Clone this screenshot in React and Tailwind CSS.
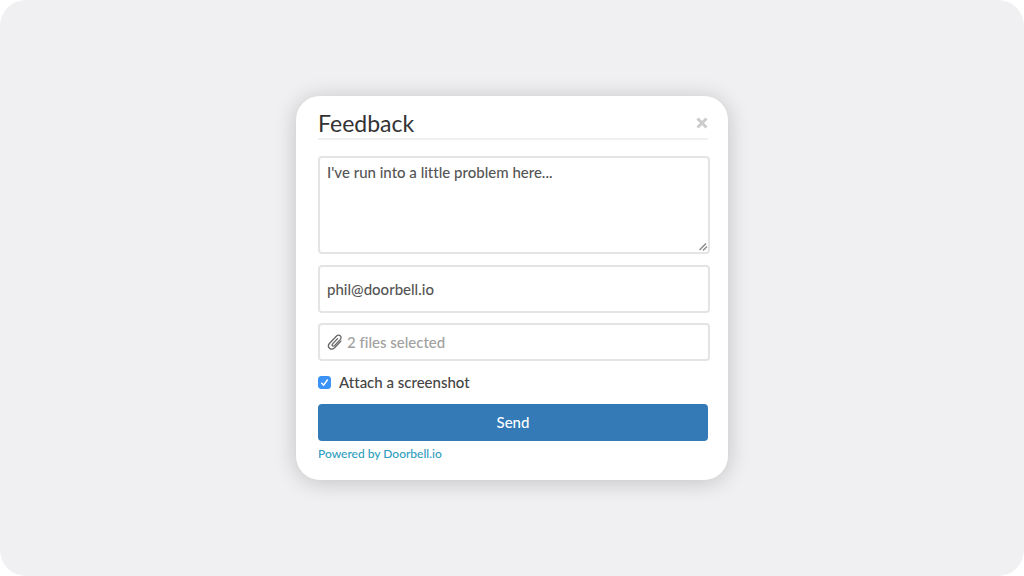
import React, { useState } from 'react';

const fieldClass =
  'block w-full rounded border-2 border-[#e4e4e4] bg-white px-[7px] text-[15px] font-medium text-[#555] outline-none focus:border-sky-400';

function PaperclipIcon() {
  return (
    <svg
      viewBox="0 0 16 18"
      className="h-[18px] w-4 shrink-0"
      fill="none"
      stroke="#666"
      strokeWidth="1.3"
      strokeLinecap="round"
      strokeLinejoin="round"
      aria-hidden="true"
    >
      <path d="M10.600 5.600 5.600 10.900c-1.300 1.500.5 3.100 1.900 1.700l5.700-6c2.600-2.900-1.200-6.100-3.900-3.400L2.600 10.200c-3.300 3.700 1.400 8 5 4.500l6.300-6.600" />
    </svg>
  );
}

function ResizeGrip() {
  return (
    <svg
      viewBox="0 0 9 9"
      className="pointer-events-none absolute right-[2px] bottom-[2px] h-[9px] w-[9px]"
      stroke="#8c8c8c"
      strokeWidth="1.5"
      aria-hidden="true"
    >
      <path d="M0.500 7 7 0.500M4 7.500 8 3.500" />
    </svg>
  );
}

function FeedbackForm() {
  const [message, setMessage] = useState("I've run into a little problem here...");
  const [email, setEmail] = useState('phil@doorbell.io');
  const [fileCount, setFileCount] = useState(2);
  const [attach, setAttach] = useState(true);
  const [open, setOpen] = useState(true);

  if (!open) return null;

  return (
    <form
      onSubmit={(e) => e.preventDefault()}
      className="w-full max-w-[432px] rounded-3xl bg-white pt-3 pr-[18px] pb-[18px] pl-[22px] shadow-[0_2px_22px_rgba(0,0,0,0.2)]"
    >
      <div className="mr-[2px] flex items-center justify-between border-b-2 border-[#f0f0f0]">
        <h1 className="text-[23px] leading-[30px] text-[#333]">Feedback</h1>
        <button
          type="button"
          aria-label="Close"
          onClick={() => setOpen(false)}
          className="flex h-5 w-3 items-center justify-center"
        >
          <svg viewBox="0 0 12 12" className="h-3 w-3" stroke="#ccc" strokeWidth="3" aria-hidden="true">
            <path d="M1.500 1.500 10.500 10.500M10.500 1.500 1.500 10.500" />
          </svg>
        </button>
      </div>

      <div className="relative mt-4">
        <textarea
          aria-label="Message"
          value={message}
          onChange={(e) => setMessage(e.target.value)}
          className={`${fieldClass} h-[98px] resize-none py-1 leading-5`}
        />
        <ResizeGrip />
      </div>

      <input
        type="email"
        aria-label="Your email address"
        value={email}
        onChange={(e) => setEmail(e.target.value)}
        className={`${fieldClass} mt-[11px] h-12`}
      />

      <label
        className="mt-[10px] flex h-[38px] w-full cursor-pointer items-center gap-1 rounded border-2 border-[#e4e4e4] px-[7px] text-[15px] font-medium text-[#a0a0a0]"
      >
        <PaperclipIcon />
        <span>{fileCount} files selected</span>
        <input
          type="file"
          multiple
          className="sr-only"
          onChange={(e) => setFileCount(e.target.files.length)}
        />
      </label>

      <label className="mt-[11px] flex items-center gap-2 text-[15px] leading-5 font-medium text-[#444]">
        <span className="relative flex h-[13px] w-[13px]">
          <input
            type="checkbox"
            checked={attach}
            onChange={(e) => setAttach(e.target.checked)}
            className="peer h-[13px] w-[13px] appearance-none rounded-[3px] border border-gray-400 bg-white checked:border-[#3b93f8] checked:bg-[#3b93f8]"
          />
          <svg
            viewBox="0 0 13 13"
            className="pointer-events-none absolute inset-0 hidden h-[13px] w-[13px] peer-checked:block"
            fill="none"
            stroke="white"
            strokeWidth="1.500"
            aria-hidden="true"
          >
            <path d="M3.300 6.800 5.600 9.200 9.700 3.500" />
          </svg>
        </span>
        Attach a screenshot
      </label>

      <div className="mr-[2px]">
        <button
          type="submit"
          className="mt-3 h-[37px] w-full rounded bg-[#337ab7] text-[15px] font-medium text-white hover:bg-[#286090]"
        >
          Send
        </button>
      </div>

      <a href="#doorbell" className="mt-[5px] block w-fit text-xs leading-4 font-medium text-[#2f9dbd] hover:underline">
        Powered by Doorbell.io
      </a>
    </form>
  );
}

function App() {
  return (
    <div className="min-h-screen bg-white font-['Lato','Liberation_Sans',sans-serif] [font-variant-ligatures:none]">
      <main className="flex min-h-screen items-center justify-center rounded-[26px] bg-[#f0f0f2] px-4 py-8">
        <FeedbackForm />
      </main>
    </div>
  );
}

export default App;
